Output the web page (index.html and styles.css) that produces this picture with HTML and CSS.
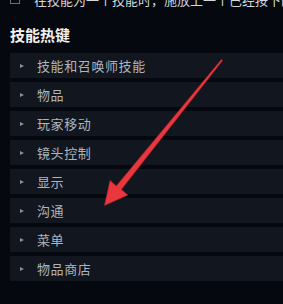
FILE: index.html
```html
<html>
<head>
  <meta charset="utf-8">
  <link rel="stylesheet" href="styles.css">
</head>
<body>
  <div class="panel">
    <div class="option">
      <span class="check"></span>
      <span class="option-text">在技能为一个技能时，施放上一个已经按下的技能</span>
    </div>
    <div class="heading">技能热键</div>
    <ul class="groups">
      <li><span class="caret"></span>技能和召唤师技能</li>
      <li><span class="caret"></span>物品</li>
      <li><span class="caret"></span>玩家移动</li>
      <li><span class="caret"></span>镜头控制</li>
      <li><span class="caret"></span>显示</li>
      <li><span class="caret"></span>沟通</li>
      <li><span class="caret"></span>菜单</li>
      <li><span class="caret"></span>物品商店</li>
    </ul>
    <svg class="arrow" width="283" height="304" viewBox="0 0 283 304">
      <polygon points="222.6,70.4 121.3,199.6 127.8,205 104.5,215.5 110,190.6 116.3,196 221.4,69.6" fill="#e8373d" stroke="#b8222a" stroke-width="0.6" stroke-linejoin="round"/>
    </svg>
  </div>
</body>
</html>
```

FILE: styles.css
```css
body {
  margin: 0;
  background: #05080f;
  font-family: "Noto Sans CJK SC", "Noto Sans", sans-serif;
  overflow: hidden;
}

.panel {
  position: relative;
  height: 304px;
  padding-left: 10px;
}

.option {
  display: flex;
  align-items: center;
  margin-top: -10px;
  height: 18px;
  color: #d4d6da;
  font-size: 13px;
  white-space: nowrap;
}

.check {
  width: 8px;
  height: 8px;
  border: 1px solid #6b7078;
  margin-right: 14px;
  flex: none;
}

.heading {
  margin-top: 19px;
  color: #f2f2f2;
  font-size: 15px;
  font-weight: bold;
  line-height: 16px;
}

.groups {
  list-style: none;
  margin: 10px 0 0 0;
  padding: 0;
  display: flex;
  flex-direction: column;
  gap: 4px;
}

.groups li {
  height: 25px;
  display: flex;
  align-items: center;
  background: #11161f;
  color: #b0b4bb;
  font-size: 13px;
  letter-spacing: 0.6px;
  padding-left: 10px;
}

.caret {
  width: 0;
  height: 0;
  border-top: 2.5px solid transparent;
  border-bottom: 2.5px solid transparent;
  border-left: 4px solid #8c9098;
  margin-right: 13px;
}

.arrow {
  position: absolute;
  left: 0;
  top: 0;
}
```
